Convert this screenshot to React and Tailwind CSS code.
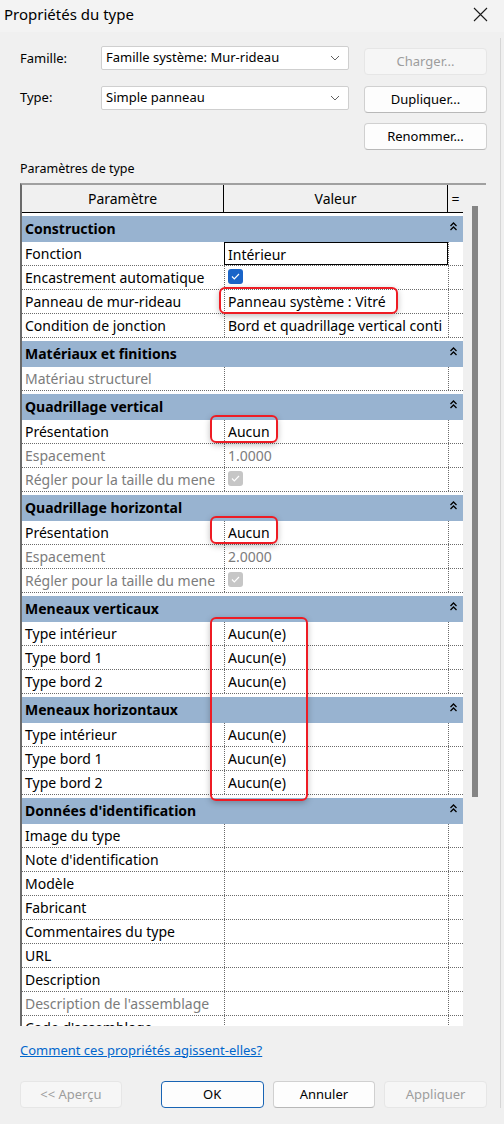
import React from "react";

const font = { fontFamily: '"Noto Sans", "Open Sans", Arial, sans-serif' };

const groups = [
  {
    title: "Construction",
    rows: [
      { label: "Fonction", value: "Intérieur", active: true },
      { label: "Encastrement automatique", check: "on" },
      { label: "Panneau de mur-rideau", value: "Panneau système : Vitré" },
      { label: "Condition de jonction", value: "Bord et quadrillage vertical conti" },
    ],
  },
  {
    title: "Matériaux et finitions",
    rows: [{ label: "Matériau structurel", dim: true }],
  },
  {
    title: "Quadrillage vertical",
    rows: [
      { label: "Présentation", value: "Aucun" },
      { label: "Espacement", value: "1.0000", dim: true },
      { label: "Régler pour la taille du mene", check: "off", dim: true },
    ],
  },
  {
    title: "Quadrillage horizontal",
    rows: [
      { label: "Présentation", value: "Aucun" },
      { label: "Espacement", value: "2.0000", dim: true },
      { label: "Régler pour la taille du mene", check: "off", dim: true },
    ],
  },
  {
    title: "Meneaux verticaux",
    rows: [
      { label: "Type intérieur", value: "Aucun(e)" },
      { label: "Type bord 1", value: "Aucun(e)" },
      { label: "Type bord 2", value: "Aucun(e)" },
    ],
  },
  {
    title: "Meneaux horizontaux",
    rows: [
      { label: "Type intérieur", value: "Aucun(e)" },
      { label: "Type bord 1", value: "Aucun(e)" },
      { label: "Type bord 2", value: "Aucun(e)" },
    ],
  },
  {
    title: "Données d'identification",
    rows: [
      { label: "Image du type" },
      { label: "Note d'identification" },
      { label: "Modèle" },
      { label: "Fabricant" },
      { label: "Commentaires du type" },
      { label: "URL" },
      { label: "Description" },
      { label: "Description de l'assemblage", dim: true },
      { label: "Code d'assemblage" },
    ],
  },
];

const Chevron = () => (
  <svg width="10" height="6" viewBox="0 0 10 6" className="text-[#606060]">
    <path d="M1 1l4 4 4-4" fill="none" stroke="currentColor" strokeWidth="1" />
  </svg>
);

const Collapse = () => (
  <svg width="7" height="9" viewBox="0 0 7 9">
    <path d="M0.5 4l3-3 3 3M0.5 8l3-3 3 3" fill="none" stroke="#000" strokeWidth="1.3" />
  </svg>
);

const Check = ({ on }) => (
  <span
    className={`mt-[3px] flex h-[15px] w-[15px] items-center justify-center rounded-[3px] ${
      on ? "bg-[#1a64c8]" : "bg-[#c6c6c6]"
    }`}
  >
    <svg width="9" height="7" viewBox="0 0 9 7">
      <path d="M1 3.5l2.3 2.3L8 1" fill="none" stroke="#fff" strokeWidth="1.2" />
    </svg>
  </span>
);

const Btn = ({ children, disabled, primary, className = "" }) => (
  <div
    className={`flex items-center justify-center rounded-[4px] border text-[13px] ${
      disabled
        ? "border-[#e6e6e6] bg-[#f6f6f6] text-[#9d9d9d]"
        : primary
        ? "border-[#1864b4] bg-[#fdfdfd] text-black"
        : "border-[#d0d0d0] border-b-[#b8b8b8] bg-[#fdfdfd] text-black"
    } ${className}`}
  >
    {children}
  </div>
);

const Select = ({ text }) => (
  <div className="flex h-[24px] w-[248px] items-center justify-between rounded-[2px] border border-[#cfcfcf] bg-white pl-[4px] pr-[8px] text-[13px] text-black">
    <span>{text}</span>
    <Chevron />
  </div>
);

const Row = ({ row }) => (
  <div className="flex h-[24px] border-b border-dotted border-[#6a6a6a] text-[14px] leading-[23px]">
    <div className={`w-[202px] truncate pl-[3px] ${row.dim ? "text-[#7c7c7c]" : "text-black"}`}>
      {row.label}
    </div>
    <div
      className={`flex w-[224px] overflow-hidden whitespace-nowrap pl-[3px] ${
        row.active ? "border border-black" : "border-l border-dotted border-[#6a6a6a]"
      } ${row.dim ? "text-[#7c7c7c]" : "text-black"}`}
    >
      {row.check ? <Check on={row.check === "on"} /> : row.value}
    </div>
    <div className="flex-1 border-l border-dotted border-[#6a6a6a]" />
  </div>
);

export default function App() {
  return (
    <div className="relative h-[1124px] w-[504px] overflow-hidden bg-[#f0f0f0]" style={font}>
      {/* title bar */}
      <div className="flex h-[32px] items-start justify-between bg-[#f3f3f3] pl-[4px] pr-[16px] pt-[3px]">
        <span className="text-[15px] text-black">Propriétés du type</span>
        <svg width="15" height="15" viewBox="0 0 15 15" className="mt-[4px]">
          <path d="M1 1l13 13M14 1L1 14" stroke="#1a1a1a" strokeWidth="1.1" />
        </svg>
      </div>
      <div className="absolute right-[3px] top-[38px] h-[1070px] w-px bg-[#d6d6d6]" />

      {/* family / type */}
      <div className="pl-[20px] pr-[17px] pt-[14px]">
        <div className="flex items-start">
          <span className="mt-[3px] w-[81px] text-[13px] text-black">Famille:</span>
          <Select text="Famille système: Mur-rideau" />
          <Btn disabled className="ml-[15px] mt-[2px] h-[27px] w-[123px]">Charger...</Btn>
        </div>
        <div className="mt-[11px] flex items-start">
          <span className="mt-[2px] w-[81px] text-[13px] text-black">Type:</span>
          <Select text="Simple panneau" />
          <Btn className="ml-[15px] h-[27px] w-[123px]">Dupliquer...</Btn>
        </div>
        <div className="mt-[10px] flex justify-end">
          <Btn className="h-[27px] w-[123px]">Renommer...</Btn>
        </div>
        <div className="mt-[10px] text-[12.5px] text-black">Paramètres de type</div>

        {/* table */}
        <div className="mt-[4px] flex h-[843px] w-[466px] overflow-hidden border-l-2 border-t-2 border-[#a0a0a0] border-l-[#6a6a6a] bg-white">
          <div className="w-[441px]">
            <div className="flex h-[28px] border-b border-black bg-[#f0f0f0] text-[14px] text-black">
              <div className="flex w-[202px] items-center justify-center border-r border-black">Paramètre</div>
              <div className="flex w-[224px] items-center justify-center border-r border-black">Valeur</div>
              <div className="flex flex-1 items-center justify-center">=</div>
            </div>
            {groups.map((g) => (
              <div key={g.title} className="pt-[3px]">
                <div className="flex h-[26px] items-start justify-between bg-[#98b3d0] pl-[3px] pr-[6px]">
                  <span className="mt-[2px] text-[14px] font-bold text-black">{g.title}</span>
                  <span className="mt-[6px]"><Collapse /></span>
                </div>
                {g.rows.map((r, i) => (
                  <Row key={i} row={r} />
                ))}
              </div>
            ))}
          </div>
          <div className="flex-1 bg-[#f0f0f0] pl-[9px] pt-[21px]">
            <div className="h-[591px] w-[6px] bg-[#858585]" />
          </div>
        </div>

        <div className="mt-[15px] text-[13px] text-[#0066cc] underline">
          Comment ces propriétés agissent-elles?
        </div>

        <div className="mt-[21px] flex">
          <Btn disabled className="h-[27px] w-[102px]">&lt;&lt; Aperçu</Btn>
          <Btn primary className="ml-[39px] h-[27px] w-[103px]">OK</Btn>
          <Btn className="ml-[9px] h-[27px] w-[103px]">Annuler</Btn>
          <Btn disabled className="ml-[9px] h-[27px] w-[103px]">Appliquer</Btn>
        </div>
      </div>

      {/* red annotation boxes */}
      <div className="pointer-events-none absolute left-[219px] top-[287px] h-[27px] w-[179px] rounded-[6px] border-2 border-[#ee1c24] shadow-[0_2px_6px_rgba(0,0,0,0.25)]" />
      <div className="pointer-events-none absolute left-[210px] top-[415px] h-[28px] w-[68px] rounded-[6px] border-2 border-[#ee1c24] shadow-[0_2px_6px_rgba(0,0,0,0.25)]" />
      <div className="pointer-events-none absolute left-[210px] top-[516px] h-[28px] w-[68px] rounded-[6px] border-2 border-[#ee1c24] shadow-[0_2px_6px_rgba(0,0,0,0.25)]" />
      <div className="pointer-events-none absolute left-[210px] top-[617px] h-[184px] w-[98px] rounded-[6px] border-2 border-[#ee1c24] shadow-[0_2px_6px_rgba(0,0,0,0.25)]" />
    </div>
  );
}
